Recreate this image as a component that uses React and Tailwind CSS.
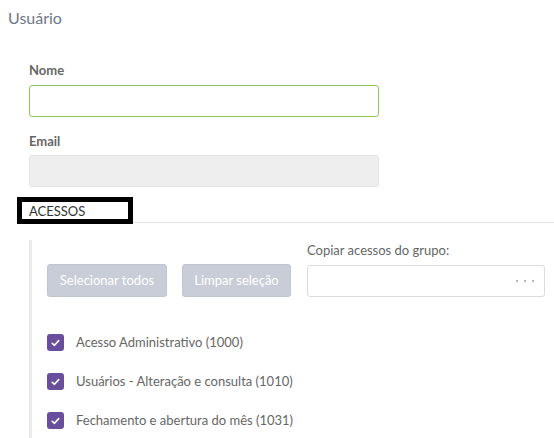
import React from "react";

function Check() {
  return (
    <span className="flex h-[17px] w-[17px] shrink-0 items-center justify-center rounded-[3px] bg-[#6a4e9e]">
      <svg width="9" height="8" viewBox="0 0 9 8" fill="none">
        <path d="M1.3 4.3 L3.5 6.3 L7.7 1.6" stroke="white" strokeWidth="1.6" strokeLinecap="round" strokeLinejoin="round" />
      </svg>
    </span>
  );
}

export default function App() {
  const items = [
    "Acesso Administrativo (1000)",
    "Usuários - Alteração e consulta (1010)",
    "Fechamento e abertura do mês (1031)",
  ];
  return (
    <div className="h-[438px] w-[554px] overflow-hidden bg-white font-['Lato',sans-serif]">
      <div className="pl-2 pt-2 text-[16px] leading-5 text-[#6d7886]">Usuário</div>

      <div className="ml-[29px] mt-[34px] w-[350px]">
        <div className="text-[13px] font-bold leading-4 text-[#666]">Nome</div>
        <div className="mt-[7px] h-[32px] rounded-[3px] border border-[#93c462] bg-white" />
        <div className="mt-[16px] text-[13px] font-bold leading-4 text-[#666]">Email</div>
        <div className="mt-[6px] h-[32px] rounded-[3px] border border-[#e3e3e3] bg-[#eeeeee]" />
      </div>

      <div className="ml-[17px] mt-[10px] h-[26px] border-b border-[#e2e2e2]">
        <div className="relative z-10 h-[27px] w-[116px] border-[5px] border-black bg-white pl-[7px] pt-[1px] text-[13px] leading-[17px] text-[#333]">
          ACESSOS
        </div>
      </div>

      <div className="ml-[29px] mt-[17px] border-l-[3px] border-[#ebebeb] pl-[15px] pt-[2px] pb-4">
        <div className="flex items-end">
          <div className="flex gap-[15px]">
            <div className="flex h-[33px] w-[120px] items-center justify-center rounded-[3px] border border-[#c0c5cf] bg-[#c8cdd7] text-[13px] text-white">
              Selecionar todos
            </div>
            <div className="flex h-[33px] w-[109px] items-center justify-center rounded-[3px] border border-[#c0c5cf] bg-[#c8cdd7] text-[13px] text-white">
              Limpar seleção
            </div>
          </div>
          <div className="ml-[16px] w-[238px]">
            <div className="text-[13px] leading-4 text-[#666]">Copiar acessos do grupo:</div>
            <div className="mt-[7px] flex h-[32px] items-center justify-end gap-[6px] rounded-[3px] border border-[#dcdcdc] bg-white pr-[10px]">
              <span className="h-[2px] w-[2px] rounded-full bg-[#999]" />
              <span className="h-[2px] w-[2px] rounded-full bg-[#999]" />
              <span className="h-[2px] w-[2px] rounded-full bg-[#999]" />
            </div>
          </div>
        </div>

        <div className="mt-[37px] flex flex-col gap-[22px]">
          {items.map((t) => (
            <div key={t} className="flex h-[17px] items-center gap-[12px]">
              <Check />
              <span className="text-[13px] leading-[17px] text-[#666]">{t}</span>
            </div>
          ))}
        </div>
      </div>
    </div>
  );
}
